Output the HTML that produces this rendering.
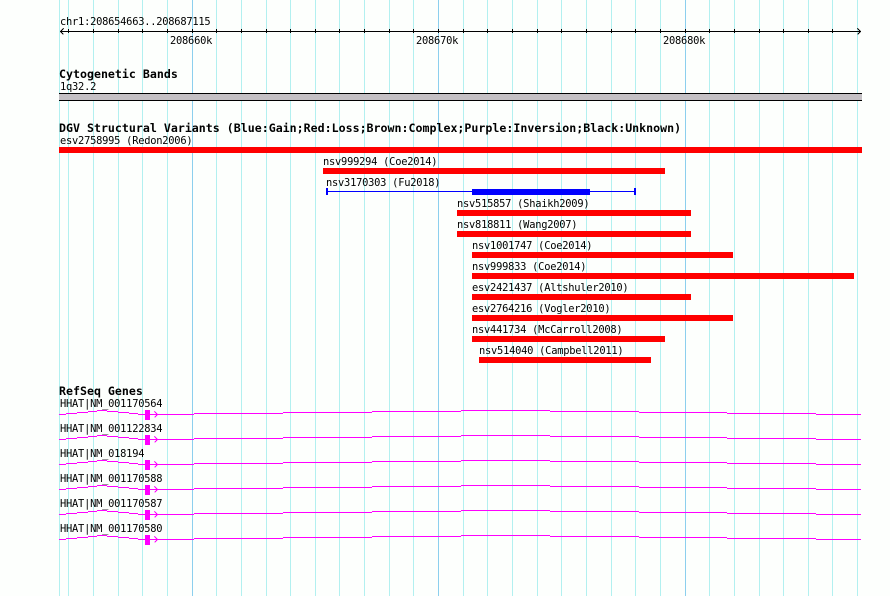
<!DOCTYPE html>
<html><head><meta charset="utf-8"><style>
html,body{margin:0;padding:0;background:#fff}
svg{display:block}
text{font-family:"DejaVu Sans Mono","Liberation Mono",monospace;font-size:10.4px;letter-spacing:-.24px;fill:#000;white-space:pre}
text.b{font-weight:bold;font-size:11.6px;letter-spacing:.01px}
</style></head><body>
<svg xmlns="http://www.w3.org/2000/svg" xmlns:xlink="http://www.w3.org/1999/xlink" width="890" height="596" viewBox="0 0 890 596">
<rect width="890" height="596" fill="#fdfffd"/>
<g shape-rendering="crispEdges">
<path stroke="#b2f0f0" stroke-width="1" fill="none" d="M59.5 0V596M68.5 0V596M93.5 0V596M118.5 0V596M142.5 0V596M167.5 0V596M216.5 0V596M241.5 0V596M266.5 0V596M290.5 0V596M315.5 0V596M339.5 0V596M364.5 0V596M389.5 0V596M413.5 0V596M463.5 0V596M487.5 0V596M512.5 0V596M537.5 0V596M561.5 0V596M586.5 0V596M611.5 0V596M635.5 0V596M660.5 0V596M709.5 0V596M734.5 0V596M759.5 0V596M783.5 0V596M808.5 0V596M832.5 0V596M857.5 0V596"/>
<path stroke="#8ccfee" stroke-width="1" fill="none" d="M192.5 0V596M438.5 0V596M685.5 0V596"/>
<!-- ruler -->
<path stroke="#000" fill="none" d="M60 31.5H861M68.5 29V33M93.5 29V33M118.5 29V33M142.5 29V33M167.5 29V33M192.5 29V33M216.5 29V33M241.5 29V33M266.5 29V33M290.5 29V33M315.5 29V33M339.5 29V33M364.5 29V33M389.5 29V33M413.5 29V33M438.5 29V33M463.5 29V33M487.5 29V33M512.5 29V33M537.5 29V33M561.5 29V33M586.5 29V33M611.5 29V33M635.5 29V33M660.5 29V33M685.5 29V33M709.5 29V33M734.5 29V33M759.5 29V33M783.5 29V33M808.5 29V33M832.5 29V33"/>
<path stroke="#000" fill="none" d="M63.5 28.5L60.5 31.5L63.5 34.5M857.5 28.5L860.5 31.5L857.5 34.5"/>
<!-- cytoband -->
<rect x="59" y="93" width="803" height="8" fill="#000"/>
<rect x="59" y="94" width="803" height="6" fill="#c4c0c4"/>
<!-- variants -->
<g fill="#f00">
<rect x="59" y="147" width="803" height="6"/>
<rect x="323" y="168" width="342" height="6"/>
<rect x="457" y="210" width="234" height="6"/>
<rect x="457" y="231" width="234" height="6"/>
<rect x="472" y="252" width="261" height="6"/>
<rect x="472" y="273" width="382" height="6"/>
<rect x="472" y="294" width="219" height="6"/>
<rect x="472" y="315" width="261" height="6"/>
<rect x="472" y="336" width="193" height="6"/>
<rect x="479" y="357" width="172" height="6"/>
</g>
<g fill="#00f">
<rect x="326" y="191" width="310" height="1"/>
<rect x="472" y="189" width="118" height="6"/>
<rect x="326" y="188" width="2" height="7"/>
<rect x="634" y="188" width="2" height="7"/>
</g>
<!-- genes -->
<defs><g id="g">
<path stroke="#f0f" fill="none" d="M59 414.5H66M66 413.5H77M77 412.5H88M88 411.5H97M97 410.5H107M107 411.5H118M118 412.5H129M129 413.5H138M138 414.5H194M194 413.5H283M283 412.5H372M372 411.5H461M461 410.5H550M550 411.5H639M639 412.5H727M727 413.5H816M816 414.5H861"/>
<rect x="145" y="410" width="5" height="10" fill="#f0f"/>
<path stroke="#f0f" fill="none" d="M154.5 411.5L157.5 414.5L154.5 417.5"/>
</g></defs>
<use xlink:href="#g" href="#g"/>
<use xlink:href="#g" href="#g" y="25"/>
<use xlink:href="#g" href="#g" y="50"/>
<use xlink:href="#g" href="#g" y="75"/>
<use xlink:href="#g" href="#g" y="100"/>
<use xlink:href="#g" href="#g" y="125"/>
</g>
<text x="60" y="25">chr1:208654663..208687115</text>
<text x="170" y="44">208660k</text>
<text x="416" y="44">208670k</text>
<text x="663" y="44">208680k</text>
<text class="b" x="59" y="78">Cytogenetic Bands</text>
<text x="60" y="90">1q32.2</text>
<text class="b" x="59" y="132">DGV Structural Variants (Blue:Gain;Red:Loss;Brown:Complex;Purple:Inversion;Black:Unknown)</text>
<text x="60" y="144">esv2758995 (Redon2006)</text>
<text x="323" y="165">nsv999294 (Coe2014)</text>
<text x="326" y="186">nsv3170303 (Fu2018)</text>
<text x="457" y="207">nsv515857 (Shaikh2009)</text>
<text x="457" y="228">nsv818811 (Wang2007)</text>
<text x="472" y="249">nsv1001747 (Coe2014)</text>
<text x="472" y="270">nsv999833 (Coe2014)</text>
<text x="472" y="291">esv2421437 (Altshuler2010)</text>
<text x="472" y="312">esv2764216 (Vogler2010)</text>
<text x="472" y="333">nsv441734 (McCarroll2008)</text>
<text x="479" y="354">nsv514040 (Campbell2011)</text>
<text class="b" x="59" y="395">RefSeq Genes</text>
<text x="60" y="407">HHAT|NM_001170564</text>
<text x="60" y="432">HHAT|NM_001122834</text>
<text x="60" y="457">HHAT|NM_018194</text>
<text x="60" y="482">HHAT|NM_001170588</text>
<text x="60" y="507">HHAT|NM_001170587</text>
<text x="60" y="532">HHAT|NM_001170580</text>
</svg>
</body></html>
